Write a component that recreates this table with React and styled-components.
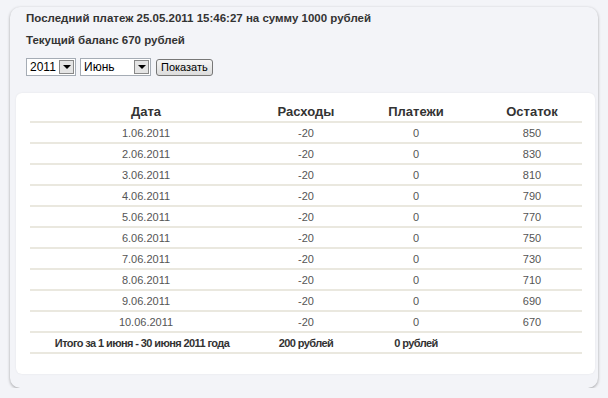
import React from 'react'
import styled, { createGlobalStyle } from 'styled-components'

const GlobalStyle = createGlobalStyle`
  html, body {
    margin: 0;
    padding: 0;
    background: #f3f4f8;
  }
  body {
    font-family: "Liberation Sans", Arial, sans-serif;
    color: #333;
  }
`;

const Panel = styled.div`
  margin: 7px 0 0 10px;
  width: 588px;
  height: 381px;
  box-sizing: border-box;
  background: #f3f4f8;
  border-radius: 10px;
  box-shadow: 0 1px 3px rgba(0, 0, 0, 0.35);
  padding: 4px 3px 0 6px;
  display: flex;
  flex-direction: column;
`;

const Info = styled.p`
  margin: 0;
  padding-left: 10px;
  font-size: 11.5px;
  font-weight: bold;
  line-height: 14px;
  color: #333;
  margin-bottom: ${({ gap }) => gap || 0}px;
`;

const Filters = styled.form`
  display: flex;
  align-items: center;
  gap: 4px;
  padding-left: 10px;
  margin: 0 0 17px;
`;

const SelectBox = styled.div`
  display: flex;
  align-items: stretch;
  width: ${({ w }) => w}px;
  height: 18px;
  box-sizing: border-box;
  border: 1px solid #a5acb5;
  background: #fff;
  font-size: 12px;
  color: #000;
  span {
    flex: 1;
    padding-left: 3px;
    line-height: 16px;
  }
`;

const Arrow = styled.div`
  width: 15px;
  margin: 1px;
  box-sizing: border-box;
  border: 1px solid #888;
  background: #e4e4e4;
  display: flex;
  align-items: center;
  justify-content: center;
  &::after {
    content: '';
    border-left: 4px solid transparent;
    border-right: 4px solid transparent;
    border-top: 4px solid #000;
  }
`;

const Button = styled.button`
  height: 17px;
  margin-left: 1px;
  padding: 0 4px;
  border: 1px solid #777;
  border-radius: 3px;
  background: linear-gradient(#f6f6f6, #dcdcdc);
  font-family: "Liberation Sans", Arial, sans-serif;
  font-size: 11px;
  line-height: 14px;
  color: #000;
`;

const Card = styled.div`
  background: #fff;
  border-radius: 6px;
  box-shadow: 0 0 2px rgba(0, 0, 0, 0.08);
  padding: 9px 13px 20px 14px;
`;

const Table = styled.table`
  width: 100%;
  border-collapse: collapse;
  table-layout: fixed;
  th, td {
    text-align: center;
    padding: 0;
    height: 19px;
    border-bottom: 2px solid #eae8df;
  }
  th {
    font-size: 13px;
    font-weight: bold;
    color: #333;
  }
  td {
    font-size: 11px;
    color: #555;
  }
`;

const TotalRow = styled.tr`
  td {
    font-weight: bold;
    color: #333;
    font-size: 11px;
    letter-spacing: -0.6px;
  }
  td:first-child {
    padding-right: 8px;
  }
`;

const rows = [850, 830, 810, 790, 770, 750, 730, 710, 690, 670].map((rest, i) => ({
  date: `${i + 1}.06.2011`,
  spend: -20,
  pay: 0,
  rest,
}));

function App() {
  return (
    <>
      <GlobalStyle />
      <Panel>
        <Info gap={8}>Последний платеж 25.05.2011 15:46:27 на сумму 1000 рублей</Info>
        <Info gap={11}>Текущий баланс 670 рублей</Info>
        <Filters onSubmit={(e) => e.preventDefault()}>
          <SelectBox w={50}><span>2011</span><Arrow /></SelectBox>
          <SelectBox w={71}><span>Июнь</span><Arrow /></SelectBox>
          <Button type="submit">Показать</Button>
        </Filters>
        <Card>
          <Table>
            <colgroup>
              <col style={{ width: 232 }} />
              <col style={{ width: 88 }} />
              <col style={{ width: 132 }} />
              <col />
            </colgroup>
            <thead>
              <tr>
                <th>Дата</th>
                <th>Расходы</th>
                <th>Платежи</th>
                <th>Остаток</th>
              </tr>
            </thead>
            <tbody>
              {rows.map((r) => (
                <tr key={r.date}>
                  <td>{r.date}</td>
                  <td>{r.spend}</td>
                  <td>{r.pay}</td>
                  <td>{r.rest}</td>
                </tr>
              ))}
              <TotalRow>
                <td>Итого за 1 июня - 30 июня 2011 года</td>
                <td>200 рублей</td>
                <td>0 рублей</td>
                <td></td>
              </TotalRow>
            </tbody>
          </Table>
        </Card>
      </Panel>
    </>
  )
}

export default App
